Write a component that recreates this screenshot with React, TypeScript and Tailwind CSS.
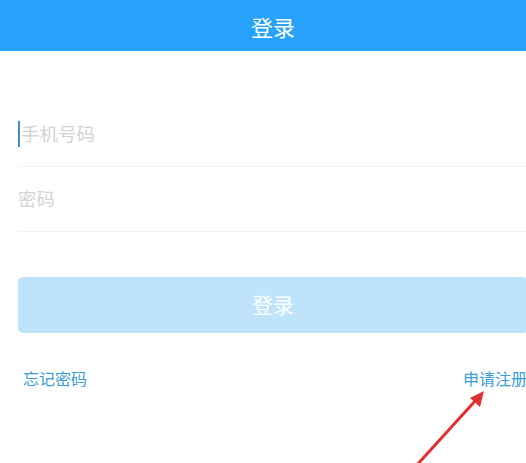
import { useState } from "react";

const font = { fontFamily: '"Noto Sans CJK SC", "Noto Sans", sans-serif' };

export default function App() {
  const [phone, setPhone] = useState("");
  const [pwd, setPwd] = useState("");
  const ready = phone.length > 0 && pwd.length > 0;

  return (
    <div className="relative w-[526px] h-[463px] overflow-hidden bg-white" style={font}>
      {/* page is wider than the viewport — right edge is cut off */}
      <div className="w-[546px]">
        {/* title bar */}
        <div className="h-[51px] bg-[#27a2fb] flex items-center justify-center">
          <span className="text-white text-[22px] leading-none">登录</span>
        </div>

        <div className="px-[18px] pt-[50px]">
          <div className="h-[66px] flex items-center border-b border-[#f1f2f3]">
            <span className="w-[2px] h-[26px] bg-[#3b8fd0] mr-px" />
            <input
              value={phone}
              onChange={(e) => setPhone(e.target.value)}
              placeholder="手机号码"
              className="flex-1 outline-none text-[18.5px] text-gray-700 placeholder:text-[#d4d4d4] bg-transparent"
            />
          </div>
          <div className="h-[65px] flex items-center border-b border-[#f1f2f3]">
            <input
              type="password"
              value={pwd}
              onChange={(e) => setPwd(e.target.value)}
              placeholder="密码"
              className="flex-1 outline-none text-[18.5px] text-gray-700 placeholder:text-[#d4d4d4] bg-transparent"
            />
          </div>

          <button
            className={`mt-[45px] w-full h-[56px] rounded-[5px] text-white text-[21px] ${
              ready ? "bg-[#27a2fb]" : "bg-[#bee3fb]"
            }`}
          >
            登录
          </button>

          <div className="mt-[34px] flex justify-between items-center text-[16px] text-[#3b9dd6] leading-[22px]">
            <span className="ml-[5px]">忘记密码</span>
            <span className="mr-[1px]">申请注册</span>
          </div>
        </div>
      </div>

      {/* red annotation arrow */}
      <svg className="absolute left-0 top-0 pointer-events-none" width="526" height="463" viewBox="0 0 526 463">
        <line x1="416" y1="466" x2="476" y2="400" stroke="#e0302f" strokeWidth="3" strokeLinecap="round" />
        <polygon points="484,391 470,398 480,407" fill="#e0302f" />
      </svg>
    </div>
  );
}
